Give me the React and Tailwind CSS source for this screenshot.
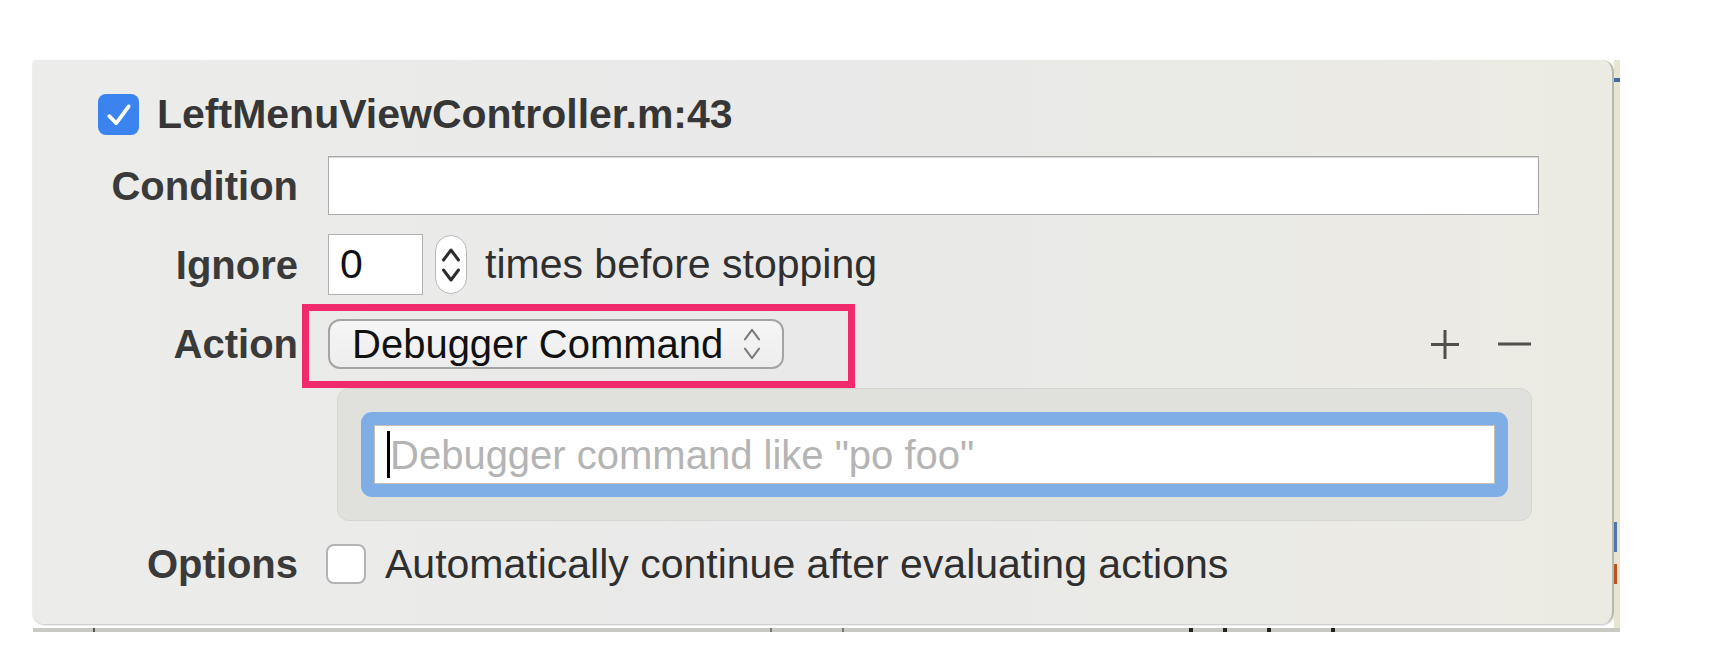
import React from 'react';

const font = { fontFamily: '"Liberation Sans", Arial, sans-serif' };

const Check = () => (
  <svg width="26" height="24" viewBox="0 0 24 22" fill="none">
    <path d="M3 12 L9.5 18.5 L21 3" stroke="white" strokeWidth="3.4" strokeLinecap="round" strokeLinejoin="round" />
  </svg>
);

const Chevrons = ({ w = 16, h = 34, stroke = '#333', sw = 2.6 }) => (
  <svg width={w} height={h} viewBox="0 0 16 34" fill="none">
    <path d="M2 13 L8 5 L14 13" stroke={stroke} strokeWidth={sw} strokeLinecap="round" strokeLinejoin="round" />
    <path d="M2 21 L8 29 L14 21" stroke={stroke} strokeWidth={sw} strokeLinecap="round" strokeLinejoin="round" />
  </svg>
);

const Label = ({ children }) => (
  <div className="flex items-center justify-end font-bold text-[40px] text-[#3a3a3a] leading-none">{children}</div>
);

const App = () => {
  return (
    <div className="min-h-screen bg-white pt-[60px] pl-[33px]" style={font}>
      <div className="flex w-[1587px]">
        {/* Breakpoint popover */}
        <div className="w-[1581px] h-[564px] rounded-[12px] rounded-tl-[3px] bg-gradient-to-r from-[#ececea] via-[#e9e9e9] to-[#ecebe3] border-r-2 border-[#b9b7ae] shadow-[0_1px_2px_rgba(0,0,0,0.25)]">
          {/* Title */}
          <div className="flex items-center gap-[18px] pl-[65px] pt-[34px]">
            <div className="w-[41px] h-[41px] rounded-[8px] bg-[#3b84f0] flex items-center justify-center">
              <Check />
            </div>
            <span className="font-bold text-[41px] leading-none text-[#363636]">LeftMenuViewController.m:43</span>
          </div>

          <div className="grid grid-cols-[265px_1fr] gap-x-[30px] pr-[73px]">
            {/* Condition */}
            <div className="mt-[21px] flex justify-end"><Label>Condition</Label></div>
            <div className="mt-[21px] h-[59px] bg-white border border-[#a9a9a9] shadow-[inset_0_1px_0_#d6d6d6]" />

            {/* Ignore */}
            <div className="mt-[19px] flex justify-end"><Label>Ignore</Label></div>
            <div className="mt-[19px] h-[61px] flex items-center">
              <div className="w-[95px] h-[61px] bg-white border border-[#b0b0b0] flex items-center pl-[11px] text-[41px] text-[#111]">0</div>
              <div className="ml-[12px] w-[32px] h-[59px] rounded-full bg-white border border-[#b8b8b8] flex items-center justify-center">
                <Chevrons w={20} h={46} stroke="#2c2c2c" sw={2.4} />
              </div>
              <span className="ml-[18px] text-[41px] text-[#2f2f2f] leading-none">times before stopping</span>
            </div>

            {/* Action */}
            <div className="mt-[24px] flex justify-end"><Label>Action</Label></div>
            <div className="mt-[24px] h-[50px] flex items-center relative">
              <div className="w-[456px] h-[50px] rounded-[12px] border-2 border-[#a4a4a4] bg-gradient-to-b from-[#f6f6f6] to-[#ededed] flex items-center pl-[22px] pr-[20px]">
                <span className="text-[40px] text-[#111] leading-none">Debugger Command</span>
                <span className="ml-auto flex items-center">
                  <Chevrons w={20} h={40} stroke="#7d7d7d" sw={1.8} />
                </span>
              </div>
              {/* highlight annotation */}
              <div className="absolute left-[-26px] top-[-15px] w-[553px] h-[84px] border-[7px] border-[#f02a6c] pointer-events-none" />
              <div className="ml-auto mr-[8px] flex items-center gap-[38px]">
                <svg width="30" height="31" viewBox="0 0 30 31">
                  <path d="M15 1 V30 M1 15.5 H29" stroke="#4f4f4b" strokeWidth="3" />
                </svg>
                <svg width="33" height="4" viewBox="0 0 33 4">
                  <path d="M0 2 H33" stroke="#4f4f4b" strokeWidth="3" />
                </svg>
              </div>
            </div>

            {/* Action detail */}
            <div className="col-start-2 mt-[19px] ml-[9px] mr-[7px] h-[133px] rounded-[12px] bg-[#e0e0dd] border border-[#d6d6d2] p-[23px]">
              <div className="h-[85px] rounded-[11px] bg-[#7faee7] p-[13px]">
                <div className="h-[59px] bg-white border border-[#c9beb3] flex items-center pl-[12px]">
                  <div className="w-[3px] h-[47px] bg-black" />
                  <span className="text-[40px] text-[#b4b4b4] leading-none">Debugger command like "po foo"</span>
                </div>
              </div>
            </div>

            {/* Options */}
            <div className="mt-[23px] flex justify-end"><Label>Options</Label></div>
            <div className="mt-[23px] h-[40px] flex items-center">
              <div className="w-[40px] h-[40px] ml-[-2px] rounded-[8px] bg-white border-2 border-[#b3b3b3]" />
              <span className="ml-[19px] text-[41px] text-[#2f2f2f] leading-none">Automatically continue after evaluating actions</span>
            </div>
          </div>
        </div>

        {/* Editor behind, peeking out */}
        <div className="w-[6px] h-[568px] bg-[#e8e4d2] flex flex-col">
          <div className="mt-[18px] h-[4px] bg-[#3f6da6]" />
          <div className="mt-[440px] h-[30px] bg-[#4f77ab] w-[3px]" />
          <div className="mt-[12px] h-[20px] bg-[#b8531d] w-[3px]" />
        </div>
      </div>
      <div className="w-[1587px] h-[4px] bg-[#c9c9c4] flex">
        <div className="ml-[60px] w-[2px] bg-[#555]" />
        <div className="ml-[675px] w-[2px] bg-[#777]" />
        <div className="ml-[70px] w-[2px] bg-[#777]" />
        <div className="ml-[345px] w-[4px] bg-[#222]" />
        <div className="ml-[30px] w-[4px] bg-[#222]" />
        <div className="ml-[40px] w-[4px] bg-[#222]" />
        <div className="ml-[60px] w-[4px] bg-[#222]" />
      </div>
    </div>
  );
};

export default App;
